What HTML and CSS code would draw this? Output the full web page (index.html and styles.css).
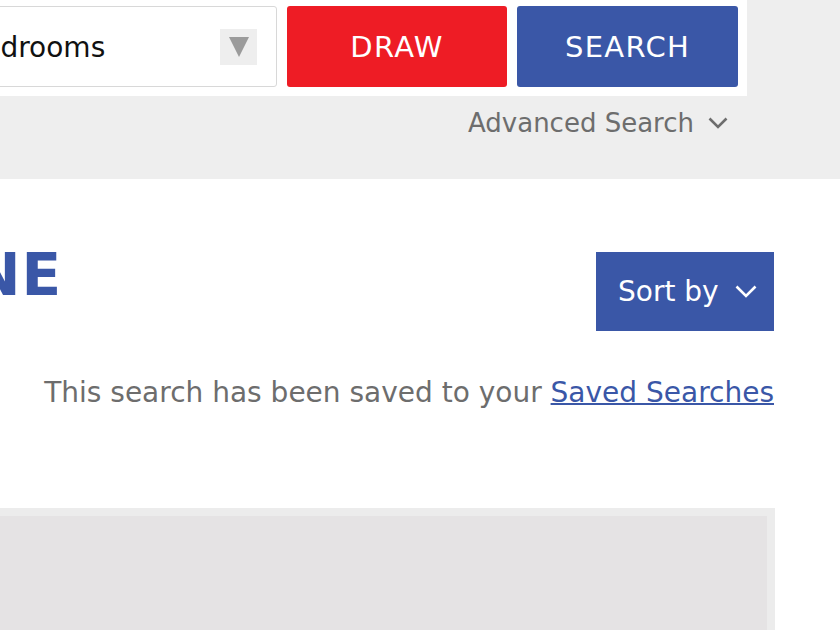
FILE: index.html
```html
<!DOCTYPE html>
<html lang="en">
<head>
<meta charset="utf-8">
<title>Search results</title>
<link rel="stylesheet" href="styles.css">
</head>
<body>
<div class="page">
  <section class="search-band">
    <div class="search-bar">
      <div class="select">
        <span class="select-label">Bedrooms</span>
        <span class="select-arrow">
          <svg width="20" height="20" viewBox="0 0 20 20"><polygon points="0,0 20,0 10,20" fill="#9b9b9b"/></svg>
        </span>
      </div>
      <button class="btn btn-draw">DRAW</button>
      <button class="btn btn-search">SEARCH</button>
    </div>
    <div class="advanced">
      <span>Advanced Search</span>
      <svg class="chev" width="20" height="12" viewBox="0 0 20 12"><polyline points="1.5,1.5 10,10 18.5,1.5" fill="none" stroke="#6d6d6d" stroke-width="2.6"/></svg>
    </div>
  </section>
  <main class="results">
    <div class="results-head">
      <h1 class="title">NE</h1>
      <button class="sort">Sort by
        <svg class="chev" width="22" height="13" viewBox="0 0 22 13"><polyline points="1.5,1.5 11,11 20.5,1.5" fill="none" stroke="#ffffff" stroke-width="2.6"/></svg>
      </button>
    </div>
    <p class="saved">This search has been saved to your <a href="#">Saved Searches</a></p>
    <div class="map-box"><div class="map-inner"></div></div>
  </main>
</div>
</body>
</html>
```

FILE: styles.css
```css
html, body {
  margin: 0;
  padding: 0;
  background: #ffffff;
  overflow: hidden;
}
body {
  font-family: "DejaVu Sans", "Noto Sans", sans-serif;
  width: 840px;
  height: 630px;
}
.page {
  width: 840px;
}
.search-band {
  background: #eeeeee;
  height: 179px;
}
.search-bar {
  background: #ffffff;
  width: 747px;
  height: 96px;
  box-sizing: border-box;
  padding: 6px 9px 9px 0;
  display: flex;
  gap: 10px;
}
.select {
  flex: none;
  width: 337px;
  margin-left: -60px;
  box-sizing: border-box;
  border: 1px solid #d8d8d8;
  border-radius: 3px;
  display: flex;
  align-items: center;
  padding: 0 19px 0 23px;
}
.select-label {
  flex: 1;
  font-size: 28px;
  color: #111111;
  padding-top: 2px;
}
.select-arrow {
  width: 37px;
  height: 36px;
  background: #eeeeee;
  display: flex;
  align-items: center;
  justify-content: center;
}
.btn {
  flex: none;
  border: none;
  border-radius: 3px;
  color: #ffffff;
  font-family: inherit;
  font-size: 29px;
  letter-spacing: 1.3px;
  cursor: pointer;
}
.btn-draw {
  width: 220px;
  background: #ee1c25;
}
.btn-search {
  width: 221px;
  background: #3a57a7;
}
.advanced {
  width: 747px;
  box-sizing: border-box;
  padding-right: 19px;
  display: flex;
  justify-content: flex-end;
  align-items: center;
  gap: 14px;
  color: #6d6d6d;
  font-size: 26px;
  margin-top: 12px;
}
.results {
  padding-right: 65px;
}
.results-head {
  display: flex;
  justify-content: space-between;
  align-items: flex-start;
  margin-top: 73px;
}
.title {
  margin: -6px 0 0 -28px;
  font-size: 58px;
  line-height: 58px;
  font-weight: bold;
  color: #3a57a7;
  letter-spacing: 1px;
}
.sort {
  width: 178px;
  height: 79px;
  border: none;
  background: #3a57a7;
  color: #ffffff;
  font-family: inherit;
  font-size: 28px;
  display: flex;
  align-items: center;
  justify-content: flex-start;
  gap: 16px;
  padding: 0 0 0 22px;
  margin-right: 1px;
}
.saved {
  margin: 45px 0 0;
  text-align: right;
  color: #6d6d6d;
  font-size: 28px;
  padding-right: 1px;
}
.saved a {
  color: #3a57a7;
  text-decoration: underline;
  text-decoration-thickness: 2px;
}
.map-box {
  margin-top: 99px;
  background: #ececec;
  padding: 8px 8px 0 0;
  height: 200px;
}
.map-inner {
  background: #e5e3e4;
  height: 100%;
}
```
